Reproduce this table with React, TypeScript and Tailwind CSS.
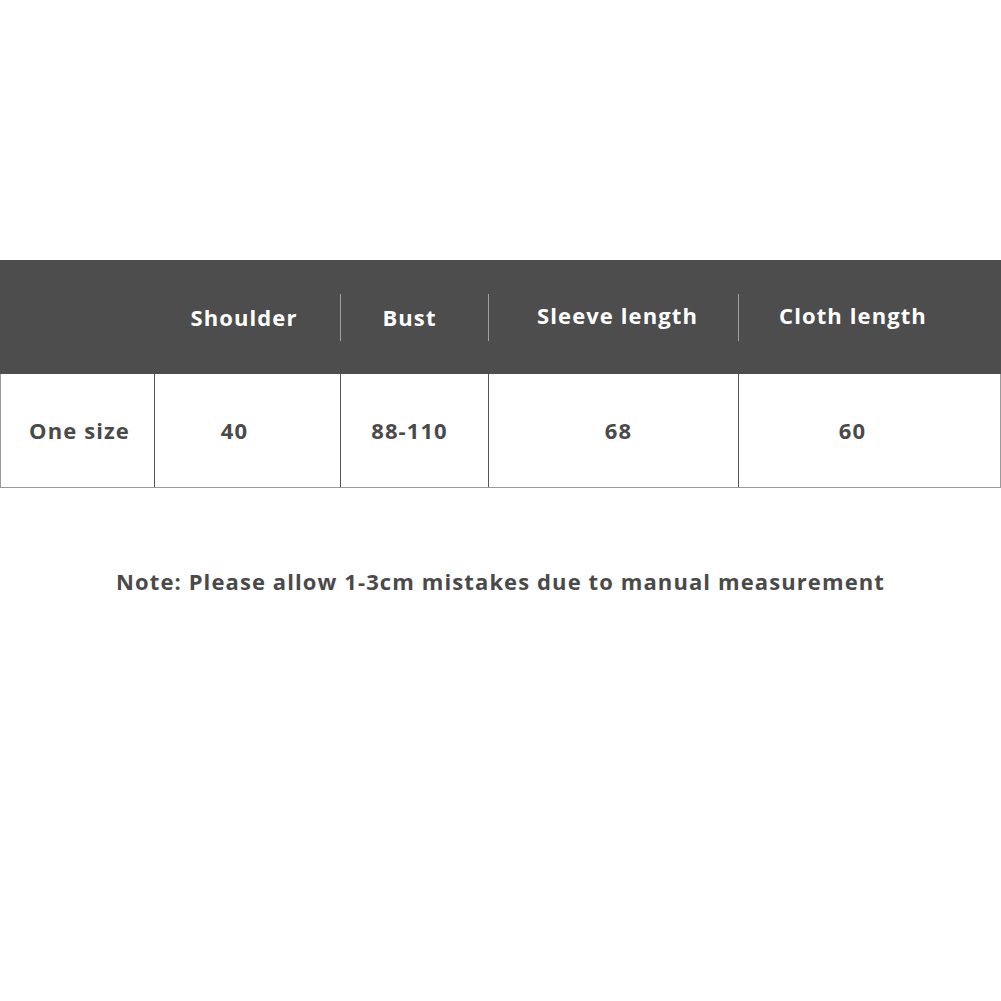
import React from "react";

const font = { fontFamily: '"Open Sans", "Liberation Sans", sans-serif' };

const App: React.FC = () => {
  return (
    <div className="min-h-[1001px] w-full bg-white pt-[260px]" style={font}>
      {/* header band */}
      <div className="flex h-[114px] w-full items-center bg-[#4d4d4d] text-[22px] font-bold tracking-[1.1px] text-white">
        <div className="w-[154px]" />
        <div className="flex h-[47px] w-[186px] items-center justify-center pr-[6px]">Shoulder</div>
        <div className="flex h-[47px] w-[148px] items-center justify-center border-l border-[#a0a0a0] pr-[10px]">Bust</div>
        <div className="flex h-[47px] w-[250px] items-center justify-center border-l border-[#a0a0a0] pb-[4px] pl-[8px]">
          Sleeve length
        </div>
        <div className="flex h-[47px] flex-1 items-center justify-center border-l border-[#a0a0a0] pb-[4px] pr-[34px]">
          Cloth length
        </div>
      </div>

      {/* size row */}
      <div className="flex h-[114px] w-full border-x border-b border-[#9a9a9a] text-[22px] font-bold tracking-[1.1px] text-[#4a4a4a]">
        <div className="flex w-[153px] items-center justify-center pl-[4px]">One size</div>
        <div className="flex w-[186px] items-center justify-center border-l border-[#555] pr-[26px]">40</div>
        <div className="flex w-[148px] items-center justify-center border-l border-[#555] pr-[10px]">88-110</div>
        <div className="flex w-[250px] items-center justify-center border-l border-[#555] pl-[10px]">68</div>
        <div className="flex flex-1 items-center justify-center border-l border-[#555] pr-[34px]">60</div>
      </div>

      <p className="mt-[78px] text-center text-[22px] leading-[30px] font-bold tracking-[1.1px] text-[#4a4a4a]">
        Note: Please allow 1-3cm mistakes due to manual measurement
      </p>
    </div>
  );
};

export default App;
